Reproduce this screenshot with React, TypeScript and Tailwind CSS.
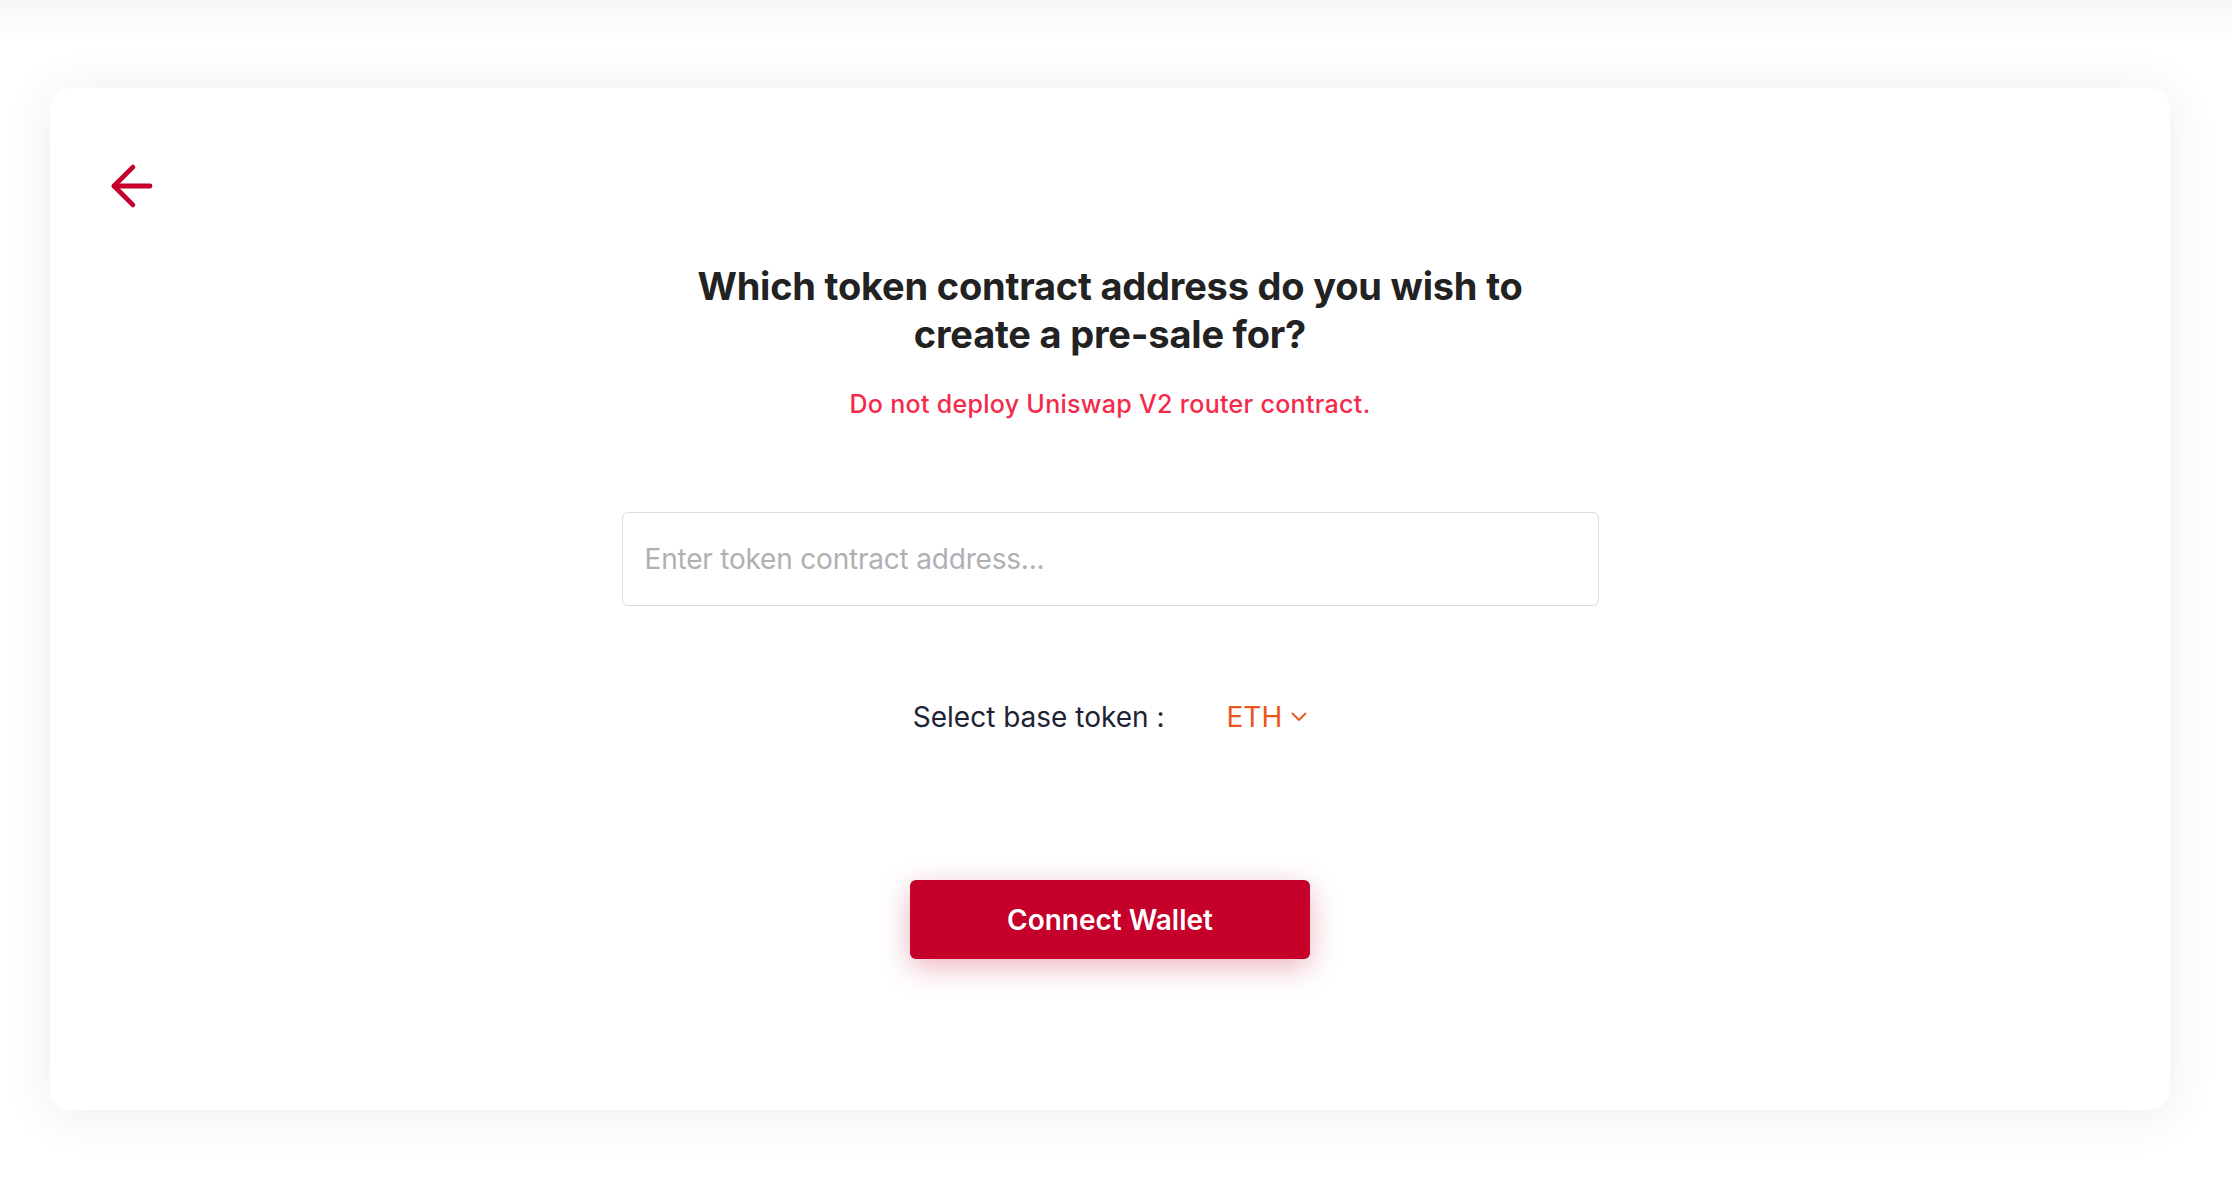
import { useState } from 'react'

const BackArrow = () => (
  <svg width="48" height="48" viewBox="0 0 16 16" fill="none" stroke="#c4002b" strokeWidth="1.6" strokeLinecap="round" strokeLinejoin="round">
    <path d="M2 8 H14" />
    <path d="M8.3 1.7 L2 8 L8.3 14.3" />
  </svg>
)

const Chevron = () => (
  <svg width="16" height="10" viewBox="0 0 16 10" fill="none" stroke="#e8561e" strokeWidth="1.8" strokeLinecap="round" strokeLinejoin="round">
    <path d="M1.5 1.5 L8 8 L14.5 1.5" />
  </svg>
)

const App = () => {
  const [address, setAddress] = useState('')

  return (
    <div className="min-h-screen bg-white font-['Inter',sans-serif]">
      <div className="h-[40px] bg-gradient-to-b from-[#f6f7f9] to-white" />
      <div className="mt-[48px] ml-[50px] w-[2120px] h-[1022px] rounded-[20px] bg-white shadow-[0_4px_50px_rgba(40,45,90,0.09)] pt-[74px] px-[58px]">
        <button className="block">
          <BackArrow />
        </button>

        <div className="flex flex-col items-center mt-[52px]">
          <h1 className="max-w-[900px] text-center text-[38px] leading-[48px] font-bold text-[#222222] tracking-[-0.2px]">
            Which token contract address do you wish to create a pre-sale for?
          </h1>
          <p className="mt-[30px] text-[25px] leading-[32px] font-medium text-[#f42a4b] tracking-[0.3px]">
            Do not deploy Uniswap V2 router contract.
          </p>

          <input
            type="text"
            value={address}
            onChange={(e) => setAddress(e.target.value)}
            placeholder="Enter token contract address..."
            className="mt-[92px] w-[977px] h-[94px] rounded-[6px] border border-[#dadbe8] px-[22px] text-[28px] tracking-[-0.2px] text-[#222] placeholder:text-[#b0b0b4] outline-none"
          />

          <div className="mt-[91px] flex items-center h-[40px]">
            <span className="text-[28px] text-[#1e2235]">Select base token :</span>
            <button className="ml-[62px] flex items-center gap-[9px] text-[28px] text-[#e8561e]">
              ETH
              <Chevron />
            </button>
          </div>

          <button className="mt-[143px] w-[400px] h-[79px] rounded-[6px] bg-[#c4002b] text-white text-[28px] font-semibold shadow-[0_8px_30px_rgba(196,0,43,0.3)]">
            Connect Wallet
          </button>
        </div>
      </div>
    </div>
  )
}

export default App
